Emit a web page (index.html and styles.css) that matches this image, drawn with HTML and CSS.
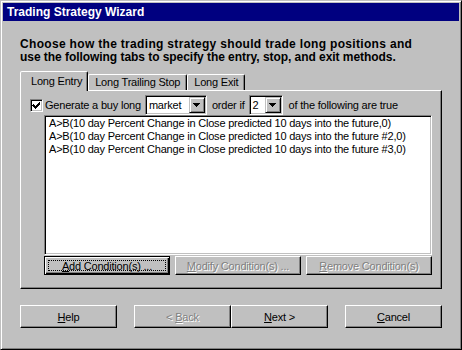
FILE: index.html
```html
<!DOCTYPE html>
<html lang="en">
<head>
  <meta charset="UTF-8" />
  <title>Trading Strategy Wizard</title>
  <link rel="stylesheet" href="styles.css">
</head>
<body>
<div class="window">
  <div class="titlebar">Trading Strategy Wizard</div>

  <div class="client">
    <p class="intro">
      <span class="intro-line first">Choose how the trading strategy should trade long positions and</span>
      <span class="intro-line">use the following tabs to specify the entry, stop, and exit methods.</span>
    </p>

    <div class="tabs">
      <div class="tab active">Long Entry</div>
      <div class="tab">Long Trailing Stop</div>
      <div class="tab">Long Exit</div>
    </div>

    <div class="panel">
      <div class="entry-row">
        <span class="check">
          <svg width="11" height="11" viewBox="0 0 11 11" shape-rendering="crispEdges"><path d="M2 4h1v1h1v1h1v-1h1v-1h1v-1h1v-1h1v3h-1v1h-1v1h-1v1h-1v1h-1v-1h-1v-1h-1v-1h-1z" fill="#000"/></svg>
        </span>
        <span class="label">Generate a buy long</span>
        <div class="combo combo-type">
          <span class="combo-value">market</span>
          <span class="drop"><svg width="7" height="4" viewBox="0 0 7 4" shape-rendering="crispEdges"><path d="M0 0h7v1h-1v1h-1v1h-1v1h-1v-1h-1v-1h-1v-1h-1z" fill="#000"/></svg></span>
        </div>
        <span class="label">order if</span>
        <div class="combo combo-count">
          <span class="combo-value">2</span>
          <span class="drop"><svg width="7" height="4" viewBox="0 0 7 4" shape-rendering="crispEdges"><path d="M0 0h7v1h-1v1h-1v1h-1v1h-1v-1h-1v-1h-1v-1h-1z" fill="#000"/></svg></span>
        </div>
        <span class="label">of the following are true</span>
      </div>

      <div class="listbox">
        <div class="item">A&gt;B(10 day Percent Change in Close predicted 10 days into the future,0)</div>
        <div class="item">A&gt;B(10 day Percent Change in Close predicted 10 days into the future #2,0)</div>
        <div class="item">A&gt;B(10 day Percent Change in Close predicted 10 days into the future #3,0)</div>
      </div>

      <div class="cond-buttons">
        <button class="btn default"><u>A</u>dd Condition(s) ...</button>
        <button class="btn" disabled><u>M</u>odify Condition(s) ...</button>
        <button class="btn" disabled><u>R</u>emove Condition(s)</button>
      </div>
    </div>

    <div class="wizard-buttons">
      <button class="btn big"><u>H</u>elp</button>
      <span class="spacer"></span>
      <button class="btn big" disabled>&lt; <u>B</u>ack</button>
      <button class="btn big"><u>N</u>ext &gt;</button>
      <span class="spacer"></span>
      <button class="btn big"><u>C</u>ancel</button>
    </div>
  </div>
</div>
</body>
</html>
```

FILE: styles.css
```css
/* whole page is one classic dialog */
html, body {
  margin: 0;
  padding: 0;
  background: #c0c0c0;
}

.window {
  width: 462px;
  height: 350px;
  box-sizing: border-box;
  padding: 2px;
  border: 1px solid;
  border-color: #c0c0c0 #000 #000 #c0c0c0;
  box-shadow: inset 1px 1px #fff, inset -1px -1px #808080;
  background: #c0c0c0;
  font-family: 'Liberation Sans', Arial, sans-serif;
  font-size: 11px;
  letter-spacing: -0.2px;
  color: #000;
}

.titlebar {
  height: 18px;
  line-height: 18px;
  padding-left: 4px;
  background: #000080;
  color: #fff;
  font-size: 12px;
  font-weight: bold;
  letter-spacing: 0;
}

.client {
  padding: 0 17px;
}

.intro {
  margin: 17px 0 7px;
  font-size: 12px;
  font-weight: bold;
  line-height: 13px;
}
.intro-line {
  display: block;
  white-space: nowrap;
  letter-spacing: -0.05px;
}
.intro-line.first {
  letter-spacing: 0.32px;
}

/* tab strip */
.tabs {
  display: flex;
  align-items: flex-end;
  height: 19px;
  position: relative;
  z-index: 1;
}
.tab {
  height: 16px;
  box-sizing: border-box;
  padding: 1px 6px 0;
  line-height: 13px;
  border: 1px solid;
  border-bottom: none;
  border-color: #fff #000 transparent #fff;
  border-radius: 2px 2px 0 0;
  box-shadow: inset -1px 0 #808080;
  white-space: nowrap;
}
.tab.active {
  height: 20px;
  margin-bottom: -1px;
  padding: 3px 5px 0 10px;
  background: #c0c0c0;
}

.panel {
  height: 199px;
  box-sizing: border-box;
  padding: 4px 9px 0;
  border: 1px solid;
  border-color: #fff #000 #000 #fff;
  box-shadow: inset -1px -1px #808080;
}

.entry-row {
  display: flex;
  align-items: center;
  height: 20px;
}

.check {
  width: 13px;
  height: 13px;
  box-sizing: border-box;
  border: 1px solid;
  border-color: #808080 #fff #fff #808080;
  box-shadow: inset 1px 1px #000, inset -1px -1px #c0c0c0;
  background: #fff;
  margin-right: 2px;
}
.check svg {
  display: block;
}

.label {
  white-space: nowrap;
}

.combo {
  display: flex;
  height: 20px;
  box-sizing: border-box;
  padding: 1px;
  border: 1px solid;
  border-color: #808080 #fff #fff #808080;
  box-shadow: inset 1px 1px #000, inset -1px -1px #c0c0c0;
  background: #fff;
}
.combo-type {
  width: 62px;
  margin: 0 5px 0 4px;
}
.combo-count {
  width: 34px;
  margin: 0 6px 0 4px;
}
.combo-value {
  flex: 1;
  padding-left: 2px;
  line-height: 16px;
}
.drop {
  width: 16px;
  height: 16px;
  box-sizing: border-box;
  display: flex;
  align-items: center;
  justify-content: center;
  border: 1px solid;
  border-color: #c0c0c0 #000 #000 #c0c0c0;
  box-shadow: inset 1px 1px #fff, inset -1px -1px #808080;
  background: #c0c0c0;
}
.drop svg {
  display: block;
}

.listbox {
  height: 140px;
  margin-left: 14px;
  box-sizing: border-box;
  padding: 1px 2px;
  border: 1px solid;
  border-color: #808080 #fff #fff #808080;
  box-shadow: inset 1px 1px #000, inset -1px -1px #c0c0c0;
  background: #fff;
}
.item {
  line-height: 13px;
  padding-left: 2px;
  white-space: nowrap;
}

/* buttons */
.btn {
  position: relative;
  box-sizing: border-box;
  padding: 0;
  font: inherit;
  letter-spacing: inherit;
  color: #000;
  background: #c0c0c0;
  border: 1px solid;
  border-color: #fff #000 #000 #fff;
  box-shadow: inset -1px -1px #808080;
  border-radius: 0;
}
.btn:disabled {
  color: #808080;
  text-shadow: 1px 1px #fff;
}
.btn.default {
  border-color: #000;
  box-shadow: inset 1px 1px #fff, inset -1px -1px #000, inset -2px -2px #808080;
}
.btn.default::after {
  content: "";
  position: absolute;
  top: 3px;
  left: 3px;
  right: 3px;
  bottom: 3px;
  border: 1px dotted #000;
}

.cond-buttons {
  display: grid;
  grid-template-columns: repeat(3, 1fr);
  gap: 5px;
  margin: 1px 0 0 14px;
}
.cond-buttons .btn {
  height: 19px;
}

.wizard-buttons {
  display: flex;
  margin-top: 16px;
}
.btn.big {
  width: 97px;
  height: 23px;
}
.spacer {
  width: 17px;
}
```
